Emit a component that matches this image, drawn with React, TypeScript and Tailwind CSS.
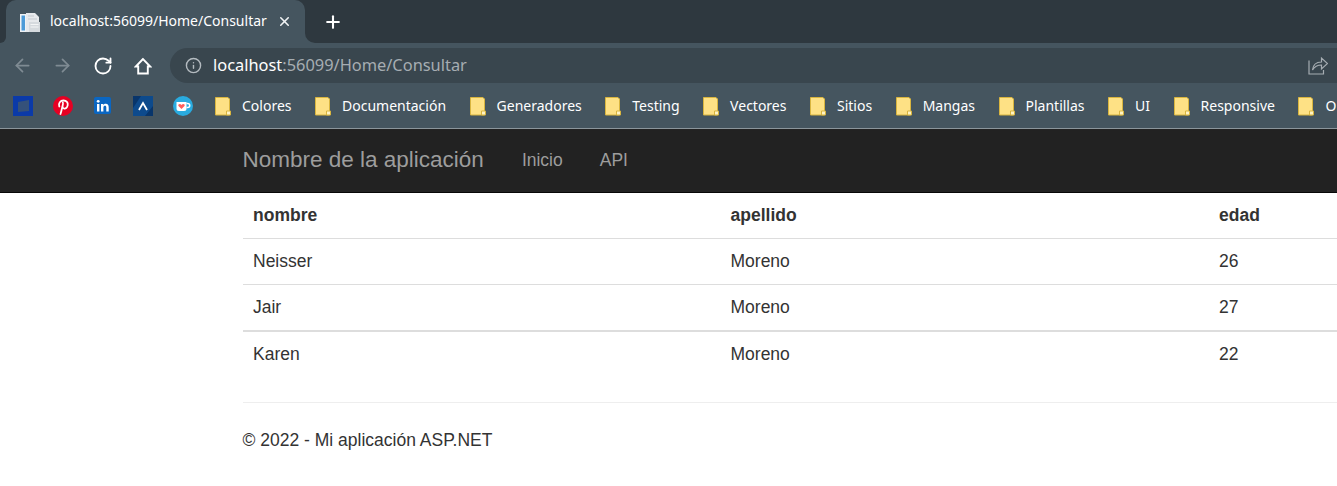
import { ArrowLeft, ArrowRight, Info, Plus, RotateCw, X } from "lucide-react";

const folders = [
  "Colores",
  "Documentación",
  "Generadores",
  "Testing",
  "Vectores",
  "Sitios",
  "Mangas",
  "Plantillas",
  "UI",
  "Responsive",
  "O",
];

const rows = [
  { nombre: "Neisser", apellido: "Moreno", edad: 26 },
  { nombre: "Jair", apellido: "Moreno", edad: 27 },
  { nombre: "Karen", apellido: "Moreno", edad: 22 },
];

function FolderIcon() {
  return (
    <svg width="16" height="19" viewBox="0 0 16 19" className="shrink-0">
      <path d="M.5.5h12.5l1.500 1.500v16H.5z" fill="#fee185" stroke="#d9b53f" />
      <path d="M11.500 18v-4h4v4z" fill="#fff3c4" stroke="#d9b53f" />
    </svg>
  );
}

function PageFavicon() {
  return (
    <svg width="20" height="20" viewBox="0 0 20 20" className="shrink-0">
      <path d="M0 2h6v18H0z" fill="#eef2f5" />
      <path d="M1.500 3.500h3.500v15H1.500z" fill="#4c9bd8" />
      <path d="M6 1h9l4 4v15H6z" fill="#e6e9ec" />
      <path d="M9 10h11v10H9z" fill="#d5dade" />
      <path d="M10.500 12.500h8M10.500 15h8" stroke="#f3f5f6" strokeWidth="1" />
      <path d="M8 4h6M8 7h9" stroke="#c3c9ce" strokeWidth="1" />
    </svg>
  );
}

function HomeIcon() {
  return (
    <svg width="18" height="18" viewBox="0 0 18 18" fill="none" stroke="#fff" strokeWidth="1.900" className="ml-[21px]">
      <path d="M9 2L1.800 9.500H4.200V16.500H13.800V9.500H16.200z" strokeLinejoin="miter" />
    </svg>
  );
}

function ShareIcon() {
  return (
    <svg width="20" height="20" viewBox="0 0 20 20" fill="none" stroke="#a6adb2" strokeWidth="1.200">
      <path d="M1 5.500v13.500h14.500v-4" />
      <path d="M4.500 15c.5-5 4-8 9-8V3l6 5.500-6 5.500v-4c-4 0-7 1.500-9 5z" />
    </svg>
  );
}

function Bookmarks() {
  return (
    <div className="flex items-center gap-5 shrink-0 -mr-[1.5px]">
      <svg width="20" height="20" viewBox="0 0 20 20">
        <path d="M0 0h20v20H0z" fill="#0b3aa8" />
        <path d="M5 6l11-2v11l-11 1z" fill="#35517a" />
      </svg>
      <svg width="20" height="20" viewBox="0 0 20 20">
        <circle cx="10" cy="10" r="10" fill="#e60023" />
        <path
          d="M7.500 18c.6-1.500 1-3.500 2-8M6.300 10.500C5 7 7.500 4.500 10.500 4.500s4.700 2 4.200 4.700c-.5 2.700-2.300 3.800-3.800 3.300-1-.3-1.500-1-1.400-2.300.2-1.500 1-3.200.3-3.500"
          fill="none"
          stroke="#fff"
          strokeWidth="1.800"
          strokeLinecap="round"
        />
      </svg>
      <svg width="20" height="20" viewBox="0 0 20 20">
        <rect x="1" y="1" width="17" height="17" rx="2" fill="#0a66c2" />
        <path d="M4 8h2.400v7.500H4zM8 8h2.300v1.200c.5-.9 1.400-1.400 2.500-1.400 2 0 2.900 1.200 2.900 3.400v4.300h-2.400v-3.900c0-1.200-.4-1.800-1.300-1.800s-1.600.6-1.600 1.900v3.800H8z" fill="#fff" />
        <circle cx="5.200" cy="5.300" r="1.400" fill="#fff" />
      </svg>
      <svg width="20" height="20" viewBox="0 0 20 20">
        <path d="M0 0h20v20H0z" fill="#0d4a8c" />
        <path d="M0 0h8L0 12zM20 20h-8l8-10z" fill="#08356b" />
        <path d="M6 14l4-7 4 7" fill="none" stroke="#fff" strokeWidth="1.800" />
      </svg>
      <svg width="20" height="20" viewBox="0 0 20 20">
        <circle cx="10" cy="10" r="10" fill="#29abe0" />
        <path d="M3.500 6h10v6.500a2.500 2.500 0 0 1-2.500 2.500H6a2.500 2.500 0 0 1-2.500-2.500z" fill="#fff" />
        <path d="M13.500 7.500h1.200a2 2 0 0 1 0 4h-1.200" fill="none" stroke="#fff" strokeWidth="1.500" />
        <path d="M8.500 13l-3-3c-1-1.500 1.500-3 3-1 1.500-2 4-.5 3 1z" fill="#ff5e5b" />
      </svg>
    </div>
  );
}

export default function App() {
  return (
    <div className="w-[1337px] h-[486px] overflow-hidden bg-white font-['Liberation_Sans',sans-serif] text-[17.5px] text-[#333]">
      {/* Chrome */}
      <div className="h-[43px] bg-[#2e383f] flex items-end pl-[6px]">
        <div className="relative w-[299px] h-[43px] bg-[#45555f] rounded-t-[10px] flex items-center pl-[14px] pr-[13px] font-['Noto_Sans',sans-serif] text-[14px] text-white">
          {/* tab flares */}
          <div className="absolute left-[-6px] bottom-0 w-[6px] h-[6px] bg-[#45555f]">
            <div className="w-full h-full bg-[#2e383f] rounded-br-[6px]" />
          </div>
          <div className="absolute right-[-10px] bottom-0 w-[10px] h-[10px] bg-[#45555f]">
            <div className="w-full h-full bg-[#2e383f] rounded-bl-[10px]" />
          </div>
          <PageFavicon />
          <span className="ml-[10px] pb-[2px] flex-1 whitespace-nowrap">localhost:56099/Home/Consultar</span>
          <X size={15} strokeWidth={2.5} className="text-[#f1f3f4]" />
        </div>
        <div className="ml-[18px] h-[43px] flex items-center">
          <Plus size={20} strokeWidth={2.5} className="text-white" />
        </div>
      </div>
      <div className="h-[45px] bg-[#45555f] flex items-center pl-[12px]">
        <ArrowLeft size={21} className="text-[#7f8b93]" />
        <ArrowRight size={21} className="ml-[19px] text-[#7f8b93]" />
        <RotateCw size={20} strokeWidth={2.2} className="ml-[20px] text-white" />
        <HomeIcon />
        <div className="ml-[18px] flex-1 h-[35px] bg-[#39464e] rounded-l-full flex items-center pl-[15px] pr-[9px] font-['Noto_Sans',sans-serif] text-[16.4px]">
          <Info size={17} className="text-[#b4bbc0]" />
          <span className="ml-[11px] pb-[1px] text-white">localhost</span>
          <span className="pb-[1px] text-[#a6adb2]">:56099/Home/Consultar</span>
          <span className="ml-auto pb-[2px]">
            <ShareIcon />
          </span>
        </div>
      </div>
      <div className="h-[41px] pb-[4px] bg-[#45555f] border-b border-[#8b959b] flex items-center pl-[13px] gap-[23.5px] whitespace-nowrap font-['Noto_Sans',sans-serif] text-[14px] text-white">
        <Bookmarks />
        {folders.map((f) => (
          <div key={f} className="flex items-center gap-[11px] shrink-0">
            <FolderIcon />
            <span className="pb-[2px]">{f}</span>
          </div>
        ))}
      </div>

      {/* Page */}
      <nav className="h-[64px] pb-[2px] bg-[#222] border-b border-[#080808] flex items-center pl-[242.5px] text-[#9d9d9d]">
        <span className="text-[22.5px]">Nombre de la aplicación</span>
        <span className="ml-[38px] pt-[2px]">Inicio</span>
        <span className="ml-[37px] pt-[2px]">API</span>
      </nav>
      <main className="pl-[242.5px]">
        <div className="w-[1200px]">
          <div className="grid grid-cols-[477.5px_488.5px_1fr] h-[46px] items-center px-[10.5px] font-bold border-b border-[#ddd]">
            <span>nombre</span>
            <span>apellido</span>
            <span>edad</span>
          </div>
          {rows.map((r, i) => (
            <div
              key={r.nombre}
              className={`grid grid-cols-[477.5px_488.5px_1fr] items-center px-[10.5px] ${
                i === 0 ? "h-[46px] border-b border-[#ddd]" : i === 1 ? "h-[47px] border-b-2 border-[#ddd]" : "h-[45px]"
              }`}
            >
              <span>{r.nombre}</span>
              <span>{r.apellido}</span>
              <span>{r.edad}</span>
            </div>
          ))}
        </div>
        <hr className="mt-[25px] border-[#eee]" />
        <footer className="mt-[24px]">© 2022 - Mi aplicación ASP.NET</footer>
      </main>
    </div>
  );
}
